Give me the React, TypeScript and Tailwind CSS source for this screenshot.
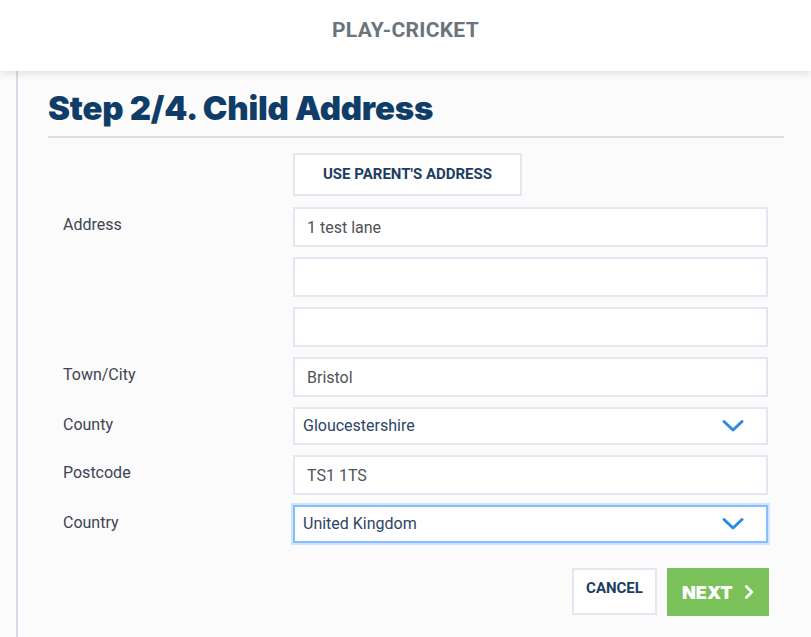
import { ChevronRight } from 'lucide-react'

const inputCls =
  'h-[40px] w-full border-2 border-[#e4e7f1] bg-white px-[12px] text-[16px] text-[#4f5257] outline-none'

function Chevron() {
  return (
    <svg
      className="pointer-events-none absolute right-[24px] top-1/2 -translate-y-1/2"
      width="22"
      height="14"
      viewBox="0 0 22 14"
      fill="none"
    >
      <path d="M2 2.5l9 8.5 9-8.5" stroke="#2a8ce0" strokeWidth="3" strokeLinecap="round" strokeLinejoin="round" />
    </svg>
  )
}

function Select({ value, focused }: { value: string; focused?: boolean }) {
  return (
    <div className="relative">
      <select
        defaultValue={value}
        className={
          'h-[38px] w-full appearance-none border-2 bg-white pl-[8px] text-[16px] text-[#2d4466] outline-none ' +
          (focused ? 'border-[#86bfff] shadow-[0_0_0_2px_#cfe5fd]' : 'border-[#e4e7f1]')
        }
      >
        <option>{value}</option>
      </select>
      <Chevron />
    </div>
  )
}

function Row({ label, children }: { label: string; children: React.ReactNode }) {
  return (
    <div className="flex">
      <div className="w-[245px] shrink-0 pl-[15px] pt-[6px] text-[16px] leading-6 text-[#3d4451]">{label}</div>
      <div className="flex flex-1 flex-col gap-[10px]">{children}</div>
    </div>
  )
}

export default function App() {
  return (
    <div className="min-h-screen bg-[#fbfbfc]" style={{ fontFamily: 'Roboto, "Noto Sans", sans-serif' }}>
      <header className="relative z-10 flex h-[71px] items-center justify-center bg-white pb-[9px] shadow-[0_2px_8px_rgba(0,0,0,0.12)]">
        <span className="text-[21px] font-bold tracking-[0.3px] text-[#6b747d]">PLAY-CRICKET</span>
      </header>

      <div className="flex min-h-[566px]">
        <div className="ml-[16px] w-[2px] shrink-0 bg-[#d5dae7]" />
        <main className="flex-1 pl-[30px] pr-[27px]">
          <div className="border-b-2 border-[#dadfea] pb-[8px] pt-[17px]">
            <h1
              className="text-[33px] font-black leading-[40px] tracking-[-0.2px] text-[#103d67]"
              style={{ fontFamily: 'Inter, sans-serif' }}
            >
              Step 2/4. Child Address
            </h1>
          </div>

          <div className="pr-[16px]">
            <div className="mt-[15px] pl-[245px]">
              <button className="h-[43px] w-[229px] border-2 border-[#e4e7f1] bg-white text-[15px] font-bold text-[#1b3d63]">
                USE PARENT'S ADDRESS
              </button>
            </div>

            <div className="mt-[11px] flex flex-col gap-[10px]">
              <Row label="Address">
                <input readOnly value="1 test lane" className={inputCls} />
                <input readOnly value="" className={inputCls} />
                <input readOnly value="" className={inputCls} />
              </Row>
              <Row label="Town/City">
                <input readOnly value="Bristol" className={inputCls} />
              </Row>
              <Row label="County">
                <Select value="Gloucestershire" />
              </Row>
              <Row label="Postcode">
                <input readOnly value="TS1 1TS" className={inputCls} />
              </Row>
              <Row label="Country">
                <Select value="United Kingdom" focused />
              </Row>
            </div>

            <div className="-mr-[1px] mt-[25px] flex justify-end gap-[10px]">
              <button className="flex h-[47px] w-[85px] items-center justify-center border-2 border-[#e4e7f1] bg-white pb-[6px] text-[15px] font-bold text-[#1b3d63]">
                CANCEL
              </button>
              <button
                className="flex h-[48px] w-[102px] items-center bg-[#7bc15a] pl-[15px] text-[18px] font-black text-white"
                style={{ fontFamily: 'Inter, sans-serif' }}
              >
                NEXT
                <ChevronRight className="ml-[5px]" size={22} strokeWidth={3} />
              </button>
            </div>
          </div>
        </main>
      </div>
    </div>
  )
}
